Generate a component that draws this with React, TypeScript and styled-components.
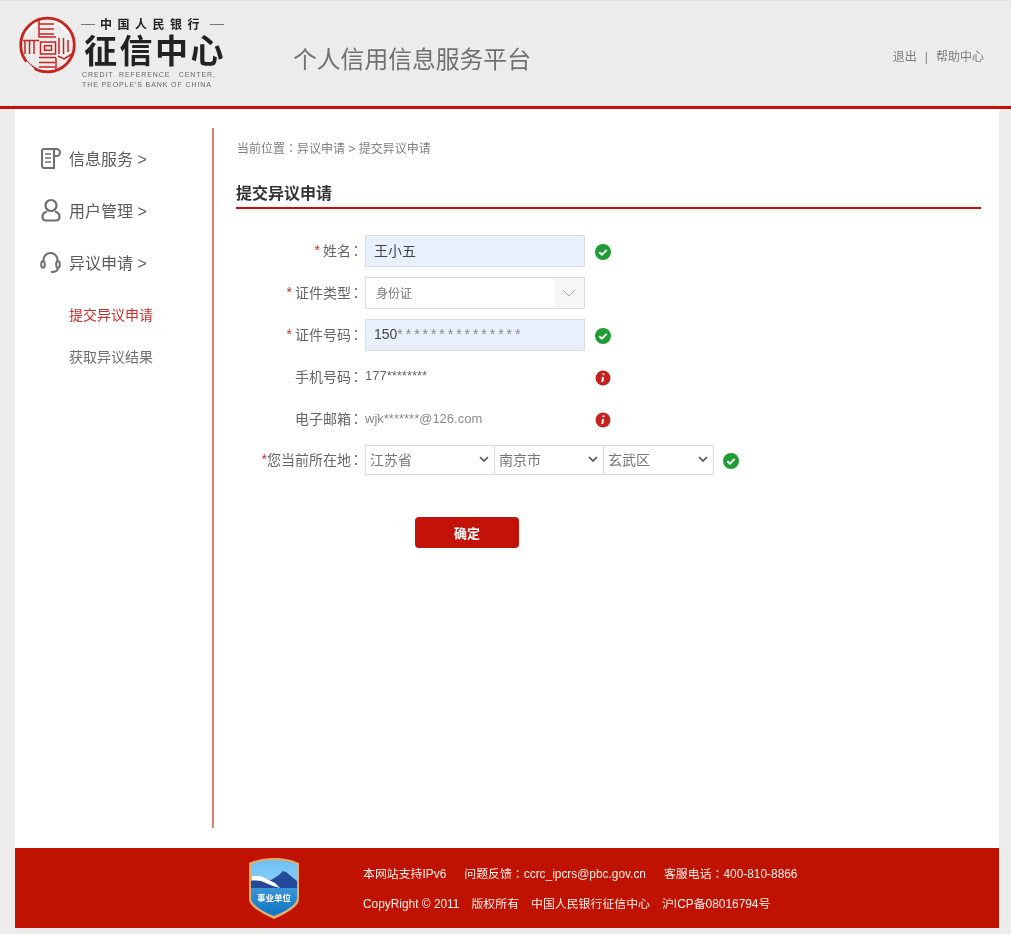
import styled, { createGlobalStyle } from "styled-components";

const FONT = `"Liberation Sans", "Noto Sans CJK SC", sans-serif`;
const RED = "#c21209";

const GlobalStyle = createGlobalStyle`
  html, body {
    margin: 0;
    padding: 0;
    background: #ececec;
  }
  body {
    font-family: ${FONT};
    color: #666;
  }
  * {
    box-sizing: border-box;
  }
`;

const Page = styled.div`
  width: 1011px;
  height: 934px;
  overflow: hidden;
  background: #ececec;
  filter: blur(0.6px);
`;

const Header = styled.header`
  height: 109px;
  display: flex;
  align-items: flex-start;
  padding: 15px 27px 0 18px;
  border-bottom: 3px solid ${RED};
  border-top: 1px solid #e2e2e2;
`;

const LogoText = styled.div`
  width: 146px;
  margin-left: 5px;
  display: flex;
  flex-direction: column;
`;

const LogoBank = styled.div`
  display: flex;
  align-items: center;
  gap: 5px;
  font: 700 12px/14px "Noto Sans CJK SC", sans-serif;
  letter-spacing: 5.500px;
  color: #222;
  white-space: nowrap;
  padding-top: 1px;
  &::before, &::after {
    content: "";
    width: 14px;
    height: 1px;
    background: #777;
    flex: none;
  }
`;

const LogoName = styled.div`
  font: 700 33px/36px "Noto Sans CJK SC", sans-serif;
  color: #222;
  white-space: nowrap;
  letter-spacing: 2.500px;
  padding-left: 3px;
`;

const LogoEnglish = styled.div`
  font: 7px/10px ${FONT};
  letter-spacing: 0.900px;
  color: #666;
  white-space: pre;
  margin: 3px 0 0 1px;
`;

const PlatformTitle = styled.h1`
  margin: 27px 0 0 66px;
  font: 400 23.800px/34px ${FONT};
  color: #707070;
  flex: 1;
`;

const HeaderLinks = styled.div`
  margin-top: 33px;
  display: flex;
  gap: 8px;
  font-size: 12px;
  line-height: 17px;
  color: #7d7d7d;
`;

const Shell = styled.div`
  width: 984px;
  height: 739px;
  margin-left: 15px;
  background: #fff;
  padding-top: 19px;
  display: flex;
  align-items: flex-start;
`;

const Sidebar = styled.nav`
  width: 199px;
  height: 700px;
  border-right: 2px solid #e27d78;
  padding: 4px 0 0 25px;
`;

const NavItem = styled.div`
  height: 52px;
  display: flex;
  align-items: center;
  gap: 8px;
  font-size: 16px;
  color: #5c5c5c;
  svg {
    width: 21px;
    height: 24px;
    flex: none;
  }
`;

const SubNav = styled.div<{ $active?: boolean }>`
  height: 42px;
  display: flex;
  align-items: center;
  padding-left: 29px;
  font-size: 14px;
  color: ${(p) => (p.$active ? "#c9302c" : "#6f6f6f")};
`;

const SubNavList = styled.div`
  margin-top: 5px;
`;

const Content = styled.main`
  flex: 1;
  padding: 11px 18px 0 22px;
`;

const Crumb = styled.div`
  font-size: 12px;
  line-height: 17px;
  color: #808080;
  padding-left: 1px;
`;

const PageTitle = styled.h2`
  margin: 23px 0 0;
  height: 28px;
  font: 700 16px/26px ${FONT};
  color: #333;
  border-bottom: 2px solid ${RED};
`;

const Form = styled.form`
  margin-top: 26px;
  display: flex;
  flex-direction: column;
`;

const Row = styled.div<{ $height?: number }>`
  height: ${(p) => p.$height ?? 42}px;
  display: flex;
  align-items: flex-start;
`;

const Label = styled.label<{ $height?: number }>`
  width: 129px;
  height: ${(p) => p.$height ?? 32}px;
  padding-bottom: 2px;
  display: flex;
  align-items: center;
  justify-content: flex-end;
  font-size: 14px;
  color: #666;
  white-space: nowrap;
`;

const Star = styled.span<{ $tight?: boolean }>`
  color: #c9302c;
  margin-right: ${(p) => (p.$tight ? 0 : 3)}px;
`;

/* the TC face centres the full-width colon, as the reference does */
const Colon = styled.span<{ $pull?: boolean }>`
  font-family: "Noto Sans CJK TC", sans-serif;
  margin: ${(p) => (p.$pull ? "0 2px 0 -2px" : "0")};
`;

const TextBox = styled.div<{ $filled?: boolean }>`
  width: 220px;
  height: 32px;
  border: 1px solid #dcdcdc;
  background: ${(p) => (p.$filled ? "#e8f0fe" : "#fff")};
  display: flex;
  align-items: center;
  padding: 0 0 2px 8px;
  font-size: 14px;
  color: #444;
`;

const Masked = styled.span`
  letter-spacing: 2.950px;
  color: #888;
`;

const SelectBox = styled(TextBox)`
  justify-content: space-between;
  padding: 0 0 0 10px;
  font-size: 12px;
  color: #777;
`;

const SelectArrow = styled.span`
  width: 30px;
  height: 30px;
  background: #f6f6f6;
  display: flex;
  align-items: center;
  justify-content: center;
`;

const SelectValue = styled.span`
  margin-bottom: 2px;
`;

const PlainValue = styled.div<{ $muted?: boolean; $height?: number }>`
  width: 220px;
  height: ${(p) => p.$height ?? 32}px;
  display: flex;
  align-items: center;
  font-size: 13px;
  color: ${(p) => (p.$muted ? "#8a8a8a" : "#666")};
`;

const Status = styled.span`
  margin: 9px 0 0 10px;
  width: 16px;
  height: 16px;
  svg {
    display: block;
  }
`;

const LocationGroup = styled.div`
  display: flex;
  height: 30px;
  border: 1px solid #dcdcdc;
`;

const LocationSelect = styled.div<{ $width: number }>`
  width: ${(p) => p.$width}px;
  display: flex;
  align-items: center;
  justify-content: space-between;
  padding: 0 5px 2px 4px;
  font-size: 14px;
  color: #777;
  border-right: 1px solid #dcdcdc;
  &:last-child {
    border-right: none;
  }
`;

const LocationStatus = styled(Status)`
  margin: 8px 0 0 9px;
`;

const SubmitButton = styled.button`
  display: block;
  margin: 42px 0 0 179px;
  width: 104px;
  height: 31px;
  border: none;
  border-radius: 4px;
  background: ${RED};
  color: #fff;
  font: 700 13px ${FONT};
`;

const Footer = styled.footer`
  width: 984px;
  height: 80px;
  margin-left: 15px;
  background: #c01200;
  display: flex;
  align-items: center;
  padding-left: 233px;
  gap: 63px;
`;

const FooterText = styled.div`
  display: flex;
  flex-direction: column;
  gap: 13px;
  font-size: 11.900px;
  line-height: 17px;
  color: #fdeeea;
`;

const FooterLine = styled.div<{ $gap: number }>`
  display: flex;
  align-items: baseline;
  gap: ${(p) => p.$gap}px;
  white-space: nowrap;
`;

const Emblem = () => (
  <svg width="58" height="58" viewBox="0 0 58 58" fill="none" stroke="#c8231c">
    <circle cx="29.500" cy="29" r="26.800" strokeWidth="2.800" />
    <g strokeWidth="1.500">
      <path d="M21 4v17h17M21 8h15M21 13h15M21 18h15" />
      <path d="M5 24.500h16M7 25v13M11.500 25v13M16 25v13" />
      <path d="M22.500 26h15v12h-15zM26.500 29.800h7v4.500h-7z" />
      <path d="M21 41.500h17M21 46.500h16M21 51h16M21 55.500h16M38 42v13" />
      <path d="M41 22v16M45.500 22v16M50 24v12M40 40l6 3 8-5" />
    </g>
    <path d="M18 7L8 17M40 7l10 10M16 54l-8-8" stroke="#fff" strokeWidth="2" />
  </svg>
);

const ScrollIcon = () => (
  <svg viewBox="0 0 21 24" fill="none" stroke="#6f6f6f" strokeWidth="2">
    <path d="M4 3h12.500a3.500 3.500 0 0 1 0 7H14" />
    <path d="M4 3C2.500 3 2 4 2 5v14.500c0 1.500 1 2.500 2.500 2.500H14V4" />
    <path d="M5 8h6M5 12h6M5 16h6" strokeWidth="1.600" />
  </svg>
);

const UserIcon = () => (
  <svg viewBox="0 0 21 24" fill="none" stroke="#6f6f6f" strokeWidth="2.200">
    <circle cx="11" cy="7.500" r="5.500" />
    <path d="M7 13.500c-2.500.8-4.500 2.500-4.500 5 0 2.500 1.500 4 3.500 4h10c2 0 3.500-1.500 3.500-4 0-2.500-2-4.200-4.500-5" />
  </svg>
);

const HeadsetIcon = () => (
  <svg viewBox="0 0 21 24" fill="none" stroke="#6f6f6f" strokeWidth="2">
    <path d="M3.500 11.500V10a7 7 0 0 1 14 0v1.500" />
    <ellipse cx="3" cy="14.500" rx="1.800" ry="3.200" />
    <ellipse cx="18" cy="14.500" rx="1.800" ry="3.200" />
    <path d="M18 17.500c0 3.500-3 4.500-7 4.500" />
  </svg>
);

const CheckIcon = () => (
  <svg width="16" height="16" viewBox="0 0 16 16">
    <circle cx="8" cy="8" r="8" fill="#1f9c33" />
    <path d="M4.300 8.200l2.600 2.500 4.800-4.800" fill="none" stroke="#fff" strokeWidth="2" />
  </svg>
);

const InfoIcon = () => (
  <svg width="16" height="16" viewBox="0 0 16 16">
    <circle cx="8" cy="8" r="7.500" fill="#c4221f" />
    <path d="M8.700 3.400l-.3 1.700M8.100 7l-.8 5" fill="none" stroke="#fff" strokeWidth="1.900" />
  </svg>
);

const Caret = () => (
  <svg width="10" height="6" viewBox="0 0 10 6" fill="none" stroke="#555" strokeWidth="1.700">
    <path d="M1 1l4 4 4-4" />
  </svg>
);

const ThinCaret = () => (
  <svg width="14" height="8" viewBox="0 0 14 8" fill="none" stroke="#a8a8a8">
    <path d="M1 1l6 6 6-6" />
  </svg>
);

const Shield = () => (
  <svg width="52" height="62" viewBox="0 0 52 62">
    <defs>
      <linearGradient id="sky" x1="0" y1="0" x2="0" y2="1">
        <stop offset="0" stopColor="#6fc0f5" />
        <stop offset="1" stopColor="#a9dcfa" />
      </linearGradient>
      <linearGradient id="sea" x1="0" y1="0" x2="0" y2="1">
        <stop offset="0" stopColor="#3b95d8" />
        <stop offset="1" stopColor="#0c74c0" />
      </linearGradient>
    </defs>
    <path d="M1 6C10 2 18 1 26 1s16 1 25 5v36c0 8-14 15-25 20C15 57 1 50 1 42z" fill="#e8ac62" />
    <path d="M3 7.500C11 4 18 3 26 3s15 1 23 4.500V41c0 7-13 14-23 18C16 55 3 48 3 41z" fill="url(#sky)" />
    <path d="M3 31V24l10-2 10 1 8-5 4-4 3 1 11 9v7z" fill="#244b9a" />
    <path d="M4 19l9 0 14 7 5 5-7-2-12-5-9-1z" fill="#fff" />
    <path d="M3 31h46v10c0 7-13 14-23 18C16 55 3 48 3 41z" fill="url(#sea)" />
    <text x="26" y="44" textAnchor="middle" fontSize="8.500" fontWeight="700" fill="#fff" fontFamily="'Noto Sans CJK SC'">事业单位</text>
  </svg>
);

export default function App() {
  return (
    <>
      <GlobalStyle />
      <Page>
        <Header>
          <Emblem />
          <LogoText>
            <LogoBank>中国人民银行</LogoBank>
            <LogoName>征信中心</LogoName>
            <LogoEnglish>{"CREDIT  REFERENCE   CENTER,\nTHE PEOPLE'S BANK OF CHINA"}</LogoEnglish>
          </LogoText>
          <PlatformTitle>个人信用信息服务平台</PlatformTitle>
          <HeaderLinks>
            <span>退出</span>
            <span>|</span>
            <span>帮助中心</span>
          </HeaderLinks>
        </Header>
        <Shell>
          <Sidebar>
            <NavItem><ScrollIcon />信息服务 &gt;</NavItem>
            <NavItem><UserIcon />用户管理 &gt;</NavItem>
            <NavItem><HeadsetIcon />异议申请 &gt;</NavItem>
            <SubNavList>
              <SubNav $active>提交异议申请</SubNav>
              <SubNav>获取异议结果</SubNav>
            </SubNavList>
          </Sidebar>
          <Content>
            <Crumb>当前位置<Colon>：</Colon>异议申请 &gt; 提交异议申请</Crumb>
            <PageTitle>提交异议申请</PageTitle>
            <Form>
              <Row>
                <Label><Star>*</Star>姓名<Colon $pull>：</Colon></Label>
                <TextBox $filled>王小五</TextBox>
                <Status><CheckIcon /></Status>
              </Row>
              <Row>
                <Label><Star>*</Star>证件类型<Colon $pull>：</Colon></Label>
                <SelectBox><SelectValue>身份证</SelectValue><SelectArrow><ThinCaret /></SelectArrow></SelectBox>
              </Row>
              <Row>
                <Label><Star>*</Star>证件号码<Colon $pull>：</Colon></Label>
                <TextBox $filled>150<Masked>***************</Masked></TextBox>
                <Status><CheckIcon /></Status>
              </Row>
              <Row>
                <Label $height={31}>手机号码<Colon $pull>：</Colon></Label>
                <PlainValue $height={29}>177********</PlainValue>
                <Status><InfoIcon /></Status>
              </Row>
              <Row>
                <Label>电子邮箱<Colon $pull>：</Colon></Label>
                <PlainValue $muted $height={30}>wjk*******@126.com</PlainValue>
                <Status><InfoIcon /></Status>
              </Row>
              <Row $height={30}>
                <Label $height={30}><Star $tight>*</Star>您当前所在地<Colon $pull>：</Colon></Label>
                <LocationGroup>
                  <LocationSelect $width={129}>江苏省<Caret /></LocationSelect>
                  <LocationSelect $width={109}>南京市<Caret /></LocationSelect>
                  <LocationSelect $width={109}>玄武区<Caret /></LocationSelect>
                </LocationGroup>
                <LocationStatus><CheckIcon /></LocationStatus>
              </Row>
              <SubmitButton type="button">确定</SubmitButton>
            </Form>
          </Content>
        </Shell>
        <Footer>
          <Shield />
          <FooterText>
            <FooterLine $gap={18}>
              <span>本网站支持IPv6</span>
              <span>问题反馈<Colon>：</Colon>ccrc_ipcrs@pbc.gov.cn</span>
              <span>客服电话<Colon>：</Colon>400-810-8866</span>
            </FooterLine>
            <FooterLine $gap={12}>
              <span>CopyRight © 2011</span>
              <span>版权所有</span>
              <span>中国人民银行征信中心</span>
              <span>沪ICP备08016794号</span>
            </FooterLine>
          </FooterText>
        </Footer>
      </Page>
    </>
  );
}
